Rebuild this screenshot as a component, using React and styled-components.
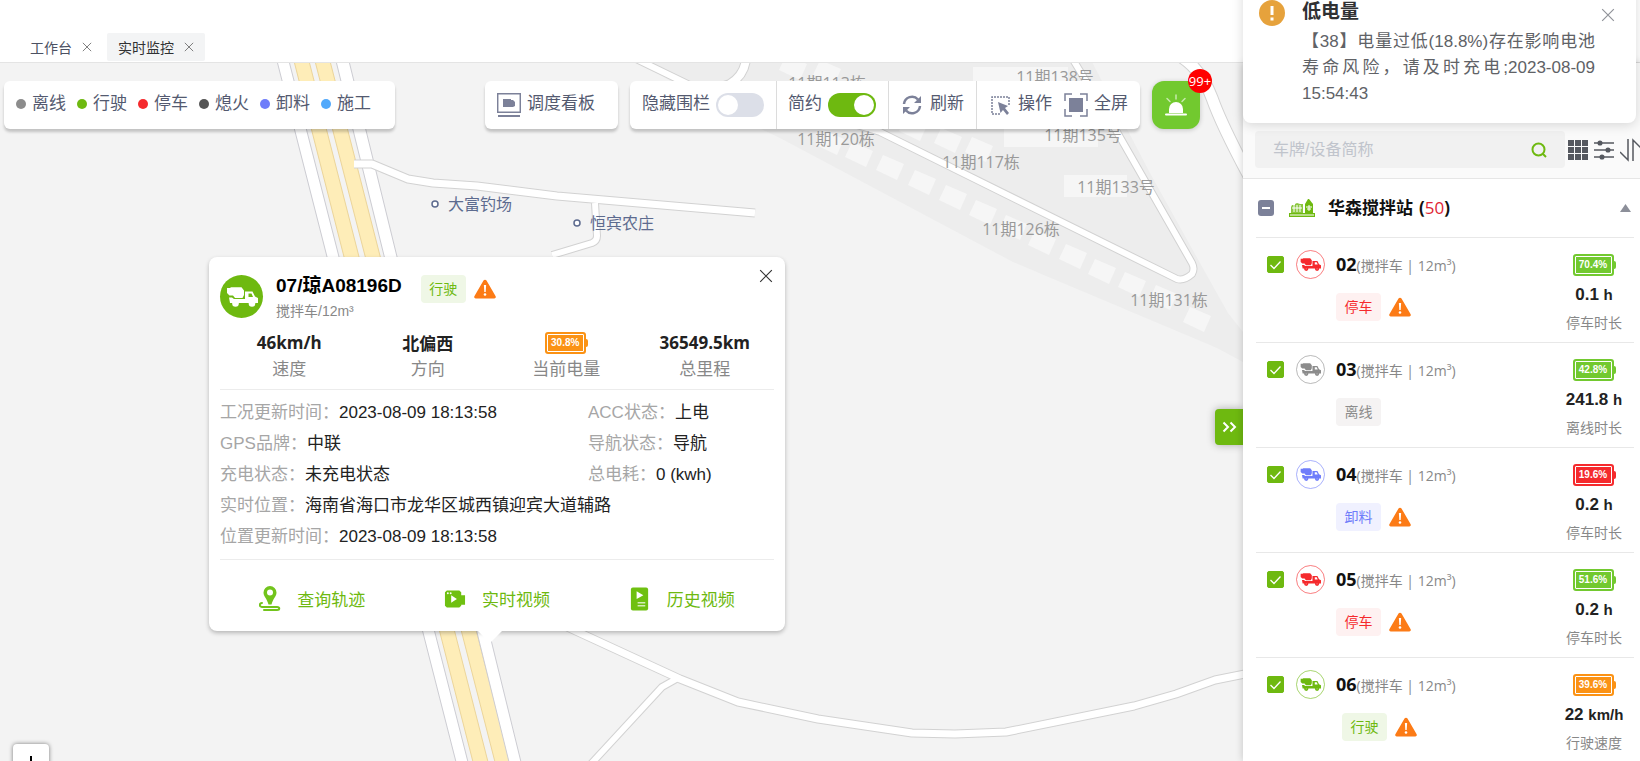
import { useState } from "react";
import styled, { createGlobalStyle } from "styled-components";

const GlobalStyle = createGlobalStyle`
  *, *::before, *::after {
    box-sizing: border-box;
  }
  body {
    margin: 0;
    overflow: hidden;
    background: #fff;
    font-family: "Liberation Sans", "Noto Sans CJK SC", sans-serif;
    font-size: 17px;
    color: #222;
  }
  button, input {
    font: inherit;
    color: inherit;
  }
  button {
    background: none;
    border: none;
    padding: 0;
    cursor: pointer;
  }
  svg {
    display: block;
    flex-shrink: 0;
  }
`;

const UI_FONT = `"Open Sans", "Noto Sans CJK SC", sans-serif`;

const STATUS = {
  offline: { name: "离线", color: "#8c8c8c", tint: "#f5f3f3" },
  driving: { name: "行驶", color: "#6eb910", tint: "#eff7e6" },
  parked: { name: "停车", color: "#f52a2d", tint: "#fef1f1" },
  stalled: { name: "熄火", color: "#555555", tint: "#f2f2f2" },
  unloading: { name: "卸料", color: "#6f7dfa", tint: "#f0f1ff" },
  working: { name: "施工", color: "#52a9fb", tint: "#eef6ff" },
};

const Page = styled.div`
  position: relative;
  display: flex;
  flex-direction: column;
  height: 100vh;
  overflow: hidden;
`;
const TabBar = styled.nav`
  display: flex;
  align-items: flex-end;
  gap: 4px;
  height: 63px;
  padding: 0 19px 1px;
  border-bottom: 1px solid #e4e4e4;
  flex-shrink: 0;
`;
const Tab = styled.div`
  display: flex;
  align-items: center;
  gap: 10px;
  height: 28px;
  padding: 0 11px;
  border-radius: 2px;
  font-size: 14px;
  color: ${(props) => (props.$active ? "#303133" : "#4c5162")};
  background: ${(props) => (props.$active ? "#f3f4f5" : "transparent")};
`;
const Body = styled.div`
  display: flex;
  flex: 1;
  min-height: 0;
`;
const MapArea = styled.main`
  position: relative;
  flex: 1;
  min-width: 0;
  overflow: hidden;
  background: #f3f3f3;
`;
const MapDrawing = styled.svg`
  position: absolute;
  top: 0;
  left: 0;
  width: 1243px;
  height: 698px;
  font-family: ${UI_FONT};
  font-size: 16px;
`;

const Overlay = styled.div`
  position: relative;
  display: flex;
  gap: 12px;
  padding: 18px 43px 0 4px;
  color: #545a70;
`;
const Bar = styled.div`
  display: flex;
  align-items: center;
  height: 48px;
  background: #fff;
  border-radius: 6px;
  box-shadow: 0 3px 3px rgba(0, 0, 0, 0.2);
  line-height: 24px;
  white-space: nowrap;
`;
const Legend = styled(Bar)`
  gap: 11px;
  padding: 0 24px 2px 12px;
  margin-right: auto;
`;
const LegendItem = styled.span`
  display: flex;
  align-items: center;
  gap: 6px;
`;
const Dot = styled.i`
  width: 10px;
  height: 10px;
  border-radius: 50%;
  background: ${(props) => props.$color};
`;
const BoardButton = styled(Bar).attrs({ as: "button" })`
  gap: 6px;
  padding: 0 23px 0 12px;
`;
const BarText = styled.span`
  padding-bottom: 2px;
`;
const ToolGroup = styled.div`
  display: flex;
  align-items: center;
  gap: 12px;
  height: 100%;
  padding: 0 12px;
  & + & {
    padding-left: 11px;
    border-left: 1px solid #dcdcdc;
  }
`;
const ToolButton = styled.button`
  display: flex;
  align-items: center;
  gap: 6px;
`;
const SwitchLabel = styled.label`
  display: flex;
  align-items: center;
  gap: 6px;
`;
const Switch = styled.input.attrs({ type: "checkbox", role: "switch" })`
  appearance: none;
  display: flex;
  width: 48px;
  height: 24px;
  margin: 0;
  padding: 2px;
  border-radius: 12px;
  background: #dcdfe8;
  cursor: pointer;
  &::before {
    content: "";
    width: 20px;
    height: 20px;
    border-radius: 50%;
    background: #fff;
  }
  &:checked {
    justify-content: flex-end;
    background: #6eb910;
  }
`;
const AlarmButton = styled.button`
  position: relative;
  display: grid;
  place-items: center;
  width: 48px;
  height: 48px;
  border-radius: 12px;
  background: #72c92f;
  box-shadow: 0 1px 5px rgba(0, 0, 0, 0.2);
`;
const AlarmBadge = styled.span`
  position: absolute;
  top: -12px;
  right: -12px;
  width: 24px;
  height: 24px;
  border-radius: 50%;
  background: #ff0000;
  color: #fff;
  font: 13px/24px ${UI_FONT};
  text-align: center;
`;

const Popup = styled.section`
  position: absolute;
  top: 194px;
  left: 209px;
  width: 576px;
  padding: 18px 11px 0;
  background: #fff;
  border-radius: 8px;
  box-shadow: 0 2px 4px rgba(0, 0, 0, 0.25);
  &::after {
    content: "";
    position: absolute;
    top: 100%;
    left: 269px;
    border: 12px solid transparent;
    border-top-color: #fff;
    border-bottom: none;
  }
`;
const PopupHead = styled.header`
  display: flex;
  align-items: flex-start;
  height: 52px;
`;
const TruckBadge = styled.span`
  display: grid;
  place-items: center;
  width: 43px;
  height: 43px;
  margin-right: 13px;
  border-radius: 50%;
  background: #6eb910;
  color: #fff;
`;
const PopupTitle = styled.h2`
  margin: 0;
  font-size: 19px;
  line-height: 22px;
  color: #000;
`;
const PopupSub = styled.p`
  margin: 2px 0 0;
  font-size: 14px;
  line-height: 24px;
  color: #888;
`;
const PopupTags = styled.div`
  display: flex;
  align-items: center;
  gap: 8px;
  margin-left: 19px;
`;
const Tag = styled.span`
  width: 45px;
  border-radius: 4px;
  font-size: 14px;
  line-height: 28px;
  text-align: center;
  color: ${(props) => STATUS[props.$status].color};
  background: ${(props) => STATUS[props.$status].tint};
`;
const PopupClose = styled.button`
  margin: -6px 1px 0 auto;
`;
const Stats = styled.dl`
  display: grid;
  grid-template-columns: repeat(4, 1fr);
  margin: 0;
  padding: 2px 0 5px;
  border-bottom: 1px solid #ececec;
  text-align: center;
`;
const Stat = styled.div`
  display: flex;
  flex-direction: column-reverse;
`;
const StatName = styled.dt`
  line-height: 28px;
  color: #888;
`;
const StatValue = styled.dd`
  display: flex;
  justify-content: center;
  align-items: center;
  height: 27px;
  margin: 0;
  font-family: ${UI_FONT};
  font-weight: 700;
`;
const Info = styled.dl`
  display: grid;
  grid-template-columns: 368px 1fr;
  margin: 0;
  padding: 7px 0;
  border-bottom: 1px solid #ececec;
`;
const InfoItem = styled.div`
  display: flex;
  grid-column: ${(props) => (props.$wide ? "1 / -1" : "auto")};
  line-height: 31px;
  white-space: nowrap;
`;
const InfoName = styled.dt`
  color: #a6a6a6;
`;
const InfoValue = styled.dd`
  margin: 0;
`;
const Actions = styled.div`
  display: grid;
  grid-template-columns: repeat(3, 1fr);
  height: 71px;
  padding-top: 6px;
`;
const Action = styled.button`
  display: flex;
  align-items: center;
  justify-content: center;
  gap: 16px;
  color: #6eb910;
`;

const Expander = styled.button`
  position: absolute;
  top: 346px;
  right: 0;
  display: grid;
  place-items: center;
  width: 28px;
  height: 36px;
  border-radius: 4px 0 0 4px;
  background: #6eb910;
  box-shadow: 0 0 8px rgba(0, 0, 0, 0.3);
`;
const ZoomIn = styled.button`
  position: absolute;
  top: 681px;
  left: 13px;
  width: 36px;
  height: 36px;
  border-radius: 4px;
  background: #fff;
  box-shadow: 0 0 4px rgba(0, 0, 0, 0.5);
`;

const Side = styled.aside`
  position: relative;
  display: flex;
  flex-direction: column;
  width: 397px;
  overflow: hidden;
  background: #fff;
  box-shadow: 0 0 8px rgba(0, 0, 0, 0.2);
`;
const SideHead = styled.div`
  display: flex;
  align-items: center;
  gap: 6px;
  padding: 68px 0 10px 12px;
  border-bottom: 1px solid #e6e6e6;
  background: #fafafa;
  color: #55585f;
  flex-shrink: 0;
`;
const SearchBox = styled.label`
  display: flex;
  align-items: center;
  width: 310px;
  height: 37px;
  margin-right: -3px;
  padding: 0 18px;
  border-radius: 4px;
  background: #f1f1f1;
  flex-shrink: 0;
`;
const SearchInput = styled.input`
  flex: 1;
  min-width: 0;
  border: none;
  outline: none;
  background: none;
  padding: 0;
  font-size: 16px;
  &::placeholder {
    color: #c0c4cc;
  }
`;
const IconButton = styled.button`
  flex-shrink: 0;
`;
const Group = styled.div`
  display: flex;
  align-items: center;
  height: 59px;
  margin: 0 6px 0 13px;
  padding: 0 3px 0 2px;
  border-bottom: 1px solid #e8e8e8;
  flex-shrink: 0;
`;
const GroupName = styled.h3`
  display: flex;
  gap: 6px;
  margin: 0 auto 0 13px;
  font: 700 17px/24px ${UI_FONT};
  color: #111;
`;
const GroupCount = styled.span`
  em {
    font-style: normal;
    font-weight: 400;
    color: #e02433;
  }
`;
const CollapseBox = styled.button`
  display: grid;
  place-items: center;
  width: 16px;
  height: 16px;
  margin-right: 15px;
  border-radius: 3px;
  background: #7c8199;
`;
const VehicleList = styled.ul`
  margin: 0 6px 0 13px;
  padding: 0;
  list-style: none;
`;
const Vehicle = styled.li`
  display: flex;
  align-items: flex-start;
  height: 105px;
  padding: 12px 0 0 11px;
  border-bottom: 1px solid #e8e8e8;
`;
const Check = styled.span`
  display: grid;
  margin: 6px 12px 0 0;
  > * {
    grid-area: 1 / 1;
  }
  svg {
    pointer-events: none;
  }
`;
const CheckInput = styled.input.attrs({ type: "checkbox" })`
  appearance: none;
  width: 17px;
  height: 17px;
  margin: 0;
  border: 1px solid #6eb910;
  border-radius: 2px;
  &:checked {
    background: #6eb910;
  }
`;
const Avatar = styled.span`
  display: grid;
  place-items: center;
  width: 29px;
  height: 29px;
  border: 1px solid ${(props) => props.$color}99;
  border-radius: 50%;
  color: ${(props) => props.$color};
`;
const VehicleMain = styled.div`
  flex: 1;
  margin-left: 11px;
`;
const VehicleName = styled.label`
  display: block;
  font: 14px/28px ${UI_FONT};
  color: #888;
  white-space: nowrap;
  b {
    font-size: 18px;
    color: #111;
  }
`;
const VehicleTags = styled.div`
  display: flex;
  align-items: center;
  gap: 8px;
  padding: ${(props) => (props.$moving ? "13px 0 0 6px" : "13px 0 0")};
`;
const VehicleData = styled.div`
  display: flex;
  flex-direction: column;
  align-items: center;
  width: 80px;
  padding-top: 4px;
`;
const VehicleValue = styled.strong`
  margin-top: 7px;
  line-height: 24px;
  small {
    font-size: 15px;
  }
`;
const VehicleCaption = styled.span`
  margin-top: 4px;
  font-size: 14px;
  line-height: 24px;
  color: #888;
`;
const BatteryCase = styled.span`
  display: flex;
  align-items: center;
  color: ${(props) => props.$color};
  &::after {
    content: "";
    width: 2px;
    height: 8px;
    border-radius: 0 2px 2px 0;
    background: currentColor;
  }
`;
const BatteryCell = styled.span`
  width: 41px;
  height: 22px;
  padding: 2px;
  border-radius: 3px;
  background: currentColor;
`;
const BatteryText = styled.span`
  display: block;
  border: 1px solid #fff;
  border-radius: 1px;
  color: #fff;
  font: 700 10px/16px "Liberation Sans", sans-serif;
  text-align: center;
`;

const Notice = styled.div`
  position: absolute;
  top: -17px;
  right: 4px;
  display: flex;
  align-items: flex-start;
  width: 393px;
  padding: 17px 13px 16px 16px;
  border-radius: 8px;
  background: #fff;
  box-shadow: 0 2px 12px rgba(0, 0, 0, 0.15);
`;
const NoticeText = styled.div`
  width: 293px;
  margin-left: 17px;
`;
const NoticeTitle = styled.h2`
  margin: 0;
  font-size: 19px;
  line-height: 23px;
  color: #303133;
`;
const NoticeBody = styled.p`
  margin: 6px 0 0;
  line-height: 26px;
  color: #606266;
  text-align: justify;
`;
const NoticeClose = styled.button`
  margin: 8px 8px 0 auto;
`;

const CloseIcon = ({ size = 12, color = "#666" }) => (
  <svg width={size} height={size} viewBox="0 0 12 12" stroke={color} fill="none">
    <path d="M1 1l10 10M11 1L1 11" />
  </svg>
);

const Truck = ({ width }) => (
  <svg width={width} viewBox="0 0 32 20" fill="currentColor">
    <path d="M1 1h3l1-.8h10.500L18 3.500V8l-1.500 3H9L7 8.500H3.500L1 6z" />
    <path
      fillRule="evenodd"
      d="M3 10.500h3l2 1.500h11V4.500h7.500L29 9.500l3 1.500v5H4zM22.500 6.500v3.500h4.500l-1.500-3.500z"
    />
    <circle cx="9.500" cy="16.500" r="3.300" />
    <circle cx="26" cy="16.500" r="3.300" />
    <circle cx="9.500" cy="16.500" r="1" fill="#fff" fillOpacity=".4" />
    <circle cx="26" cy="16.500" r="1" fill="#fff" fillOpacity=".4" />
  </svg>
);

const Warning = () => (
  <svg width="22" height="20" viewBox="0 0 22 20">
    <path
      d="M9.500 1.500a1.800 1.800 0 0 1 3 0l9 15.500a1.600 1.600 0 0 1-1.500 2.500H2A1.600 1.600 0 0 1 .5 17z"
      fill="#fc7b16"
    />
    <path d="M9.900 6h2.200l-.4 7h-1.400z" fill="#fff" />
    <circle cx="11" cy="15.500" r="1.300" fill="#fff" />
  </svg>
);

const Battery = ({ level, color }) => (
  <BatteryCase $color={color}>
    <BatteryCell>
      <BatteryText>{level}</BatteryText>
    </BatteryCell>
  </BatteryCase>
);

const BoardIcon = () => (
  <svg width="24" height="24" viewBox="0 0 24 24" fill="none" stroke="#7c8199">
    <path d="M.7 .7h22.600v18.600H.7z" strokeWidth="1.500" />
    <path d="M1 23h22" strokeWidth="2" />
    <path d="M6 6h8v1h2l2 2v4l-2 1H6z" fill="#7c8199" stroke="none" />
  </svg>
);

const RefreshIcon = () => (
  <svg width="24" height="24" viewBox="0 0 24 24" fill="none" stroke="#7c8199" strokeWidth="2.500">
    <path d="M4 11a8 8 0 0 1 14-4.500M20 13a8 8 0 0 1-14 4.500" />
    <path d="M21 3v7h-7zM3 21v-7h7z" fill="#7c8199" stroke="none" />
  </svg>
);

const SelectIcon = () => (
  <svg width="24" height="24" viewBox="0 0 24 24" fill="none" stroke="#7c8199" strokeWidth="1.500">
    <path d="M12 21H4V4h17v9" strokeDasharray="2 1" />
    <path d="M10 9l10 4-3 2 4 5-2 2-4-5-2.500 3z" fill="#7c8199" stroke="none" />
  </svg>
);

const FullIcon = () => (
  <svg width="24" height="24" viewBox="0 0 24 24" fill="none" stroke="#7c8199" strokeWidth="1.500">
    <path d="M1 8V1h7M16 1h7v7M23 16v7h-7M8 23H1v-7" />
    <path d="M5 5h14v14H5z" fill="#7c8199" stroke="none" />
  </svg>
);

const SirenIcon = () => (
  <svg width="24" height="24" viewBox="0 0 24 24" fill="#fff" stroke="#fff" strokeLinecap="round">
    <path d="M5 20v-4a7 7 0 0 1 14 0v4z" stroke="none" />
    <path d="M2 21.500h20" strokeWidth="2" />
    <path d="M12 6V2M6 8.500L3 5.500M18 8.500L21 5.500" strokeWidth="1.500" opacity=".6" />
  </svg>
);

const TrackIcon = () => (
  <svg width="22" height="25" viewBox="0 0 22 25" fill="none" stroke="#72c41c">
    <path
      d="M11 0a6.500 6.500 0 0 1 6.500 6.500c0 4-3.500 6-5 12h-3c-1.500-6-5-8-5-12A6.500 6.500 0 0 1 11 0zm0 3.500a3 3 0 1 0 0 6 3 3 0 0 0 0-6z"
      fill="#72c41c"
      fillRule="evenodd"
      stroke="none"
    />
    <path d="M3 17c-3 .5-3 3.500 0 4h15c3 0 3 3 0 3H5" strokeWidth="2" strokeLinecap="round" />
  </svg>
);

const LiveIcon = () => (
  <svg width="22" height="20" viewBox="0 0 23 20" fill="#6fc011">
    <path d="M3 1h13l2 2v3h4v10h-4v1l-2 2H3l-2-2V3z" />
    <path d="M7.500 6l6 4-6 4z" fill="#fff" />
    <circle cx="4" cy="4" r="1" fill="#fff" />
    <circle cx="7" cy="4" r="1" fill="#fff" />
  </svg>
);

const HistoryIcon = () => (
  <svg width="22" height="24" viewBox="0 0 23 24" fill="#6fc011">
    <rect x="2" y="0" width="18" height="24" rx="2" />
    <path d="M8 4l7 4-7 4z" fill="#fff" />
    <path d="M9 16h8M9 19h8" stroke="#fff" strokeWidth="1.500" opacity=".7" />
  </svg>
);

const StationIcon = () => (
  <svg width="26" height="18" viewBox="0 0 26 18" fill="#6eb910">
    <path d="M0 14h26v4H0z" />
    <path d="M3 6h3V5l2-1 3 1h3v10H2V8z" opacity=".8" />
    <path d="M16 5l3-5h1l4 5v9h-8z" />
    <path
      d="M1 16h24M3 9h10M5 6v7M8 6v7M11 6v7M17 8h6M18 10h4M20 6v6"
      stroke="#fff"
      strokeWidth="1"
      fill="none"
    />
  </svg>
);

const HIGHWAY = [
  { from: [277, 289], to: [456, 468], fill: "#fff", edge: "#ccccd2" },
  { from: [294, 309], to: [473, 488], fill: "#feedb8", edge: "#ecd59a" },
  { from: [315, 330], to: [495, 510], fill: "#feedb8", edge: "#ecd59a" },
  { from: [336, 349], to: [509, 521], fill: "#fff", edge: "#ccccd2" },
];

const ROADS = [
  { d: "M354 164h18L408 179L433 183L477 186L557 196L755 213", width: 7 },
  { d: "M595 203L597 236Q597 241 592 243L552 255", width: 6 },
  { d: "M565 626L680 679L738 702L818 719L912 733L955 734L1006 732L1134 706L1176 694L1215 680L1245 674", width: 7 },
  { d: "M678 678L662 687L590 765", width: 6 },
  { d: "M630 56L700 90L800 108L880 132L1177 279Q1184 281 1192 274Q1195 269 1192 263L1117 132L1072 58", width: 6 },
  { d: "M746 56Q746 74 730 84L700 94", width: 8 },
  { d: "M1176 54Q1200 66 1212 98Q1222 126 1250 178", width: 11 },
];

const HOUSES = [
  [793, 67], [827, 72], [830, 142], [859, 154], [890, 167], [922, 182],
  [953, 197], [983, 212], [1013, 227], [1042, 242], [1073, 256],
  [1102, 271], [1132, 284], [1163, 297], [1197, 319], [948, 140],
  [979, 149], [913, 128],
];

const BUILDING_LABELS = [
  ["11期113栋", 827, 89],
  ["11期138号", 1055, 83],
  ["11期135号", 1083, 141],
  ["11期120栋", 836, 145],
  ["11期117栋", 981, 168],
  ["11期133号", 1116, 193],
  ["11期126栋", 1021, 235],
  ["11期131栋", 1169, 306],
];

const PLACES = [
  ["大富钓场", 435, 204],
  ["恒宾农庄", 577, 223],
];

const BaseMap = () => (
  <MapDrawing viewBox="0 63 1243 698">
    <path d="M640 62H1092L1150 173L1200 263L1228 313L1243 332V362L1217 348L1013 262L780 138L700 100z" fill="#ededed" />
    {HOUSES.map(([x, y]) => (
      <path
        key={`${x}-${y}`}
        transform={`translate(${x} ${y})`}
        d="M-7 -12L14 -3L7 13L-14 3z"
        fill="#f6f6f6"
      />
    ))}
    <path d="M973 67h95v22h-95zM1004 126h94v21h-94zM1064 175h63v22h-63z" fill="#f6f6f6" />
    {HIGHWAY.map(({ from, to, fill, edge }) => (
      <path
        key={from[0]}
        d={`M${from[0]} 61L${from[1]} 61L${to[1]} 762L${to[0]} 762z`}
        fill={fill}
        stroke={edge}
      />
    ))}
    <g fill="none" strokeLinejoin="round">
      {ROADS.map(({ d, width }) => (
        <path key={d} d={d} stroke="#d2d2d2" strokeWidth={width + 2} />
      ))}
      {ROADS.map(({ d, width }) => (
        <path key={d} d={d} stroke="#fff" strokeWidth={width} />
      ))}
    </g>
    {BUILDING_LABELS.map(([name, x, y]) => (
      <text key={name} x={x} y={y} fill="#999" textAnchor="middle">
        {name}
      </text>
    ))}
    {PLACES.map(([name, x, y]) => (
      <g key={name} fill="#5d6b8f">
        <circle cx={x} cy={y} r="3" fill="#fff" stroke="#5d6b8f" strokeWidth="1.500" />
        <text x={x + 13} y={y + 6}>
          {name}
        </text>
      </g>
    ))}
  </MapDrawing>
);

const MapToolbar = () => {
  const [hideFence, setHideFence] = useState(false);
  const [simple, setSimple] = useState(true);
  return (
    <Overlay>
      <Legend>
        {Object.values(STATUS).map(({ name, color }) => (
          <LegendItem key={name}>
            <Dot $color={color} />
            {name}
          </LegendItem>
        ))}
      </Legend>
      <BoardButton>
        <BoardIcon />
        <BarText>调度看板</BarText>
      </BoardButton>
      <Bar>
        <ToolGroup>
          <SwitchLabel>
            <BarText>隐藏围栏</BarText>
            <Switch checked={hideFence} onChange={(e) => setHideFence(e.target.checked)} />
          </SwitchLabel>
        </ToolGroup>
        <ToolGroup>
          <SwitchLabel>
            <BarText>简约</BarText>
            <Switch checked={simple} onChange={(e) => setSimple(e.target.checked)} />
          </SwitchLabel>
        </ToolGroup>
        <ToolGroup>
          <ToolButton>
            <RefreshIcon />
            <BarText>刷新</BarText>
          </ToolButton>
        </ToolGroup>
        <ToolGroup>
          <ToolButton>
            <SelectIcon />
            <BarText>操作</BarText>
          </ToolButton>
          <ToolButton>
            <FullIcon />
            <BarText>全屏</BarText>
          </ToolButton>
        </ToolGroup>
      </Bar>
      <AlarmButton aria-label="报警">
        <SirenIcon />
        <AlarmBadge>99+</AlarmBadge>
      </AlarmButton>
    </Overlay>
  );
};

const STATS = [
  ["速度", "46km/h"],
  ["方向", "北偏西"],
  ["当前电量", <Battery key="battery" level="30.8%" color="#fb9214" />],
  ["总里程", "36549.5km"],
];

const INFO = [
  { name: "工况更新时间：", value: "2023-08-09 18:13:58" },
  { name: "ACC状态：", value: "上电" },
  { name: "GPS品牌：", value: "中联" },
  { name: "导航状态：", value: "导航" },
  { name: "充电状态：", value: "未充电状态" },
  { name: "总电耗：", value: "0 (kwh)" },
  { name: "实时位置：", value: "海南省海口市龙华区城西镇迎宾大道辅路", wide: true },
  { name: "位置更新时间：", value: "2023-08-09 18:13:58", wide: true },
];

const VehiclePopup = ({ onClose }) => (
  <Popup>
    <PopupHead>
      <TruckBadge>
        <Truck width={32} />
      </TruckBadge>
      <div>
        <PopupTitle>07/琼A08196D</PopupTitle>
        <PopupSub>搅拌车/12m³</PopupSub>
      </div>
      <PopupTags>
        <Tag $status="driving">行驶</Tag>
        <Warning />
      </PopupTags>
      <PopupClose aria-label="关闭" onClick={onClose}>
        <CloseIcon size={14} color="#333" />
      </PopupClose>
    </PopupHead>
    <Stats>
      {STATS.map(([name, value]) => (
        <Stat key={name}>
          <StatName>{name}</StatName>
          <StatValue>{value}</StatValue>
        </Stat>
      ))}
    </Stats>
    <Info>
      {INFO.map(({ name, value, wide }) => (
        <InfoItem key={name} $wide={wide}>
          <InfoName>{name}</InfoName>
          <InfoValue>{value}</InfoValue>
        </InfoItem>
      ))}
    </Info>
    <Actions>
      <Action>
        <TrackIcon />
        查询轨迹
      </Action>
      <Action>
        <LiveIcon />
        实时视频
      </Action>
      <Action>
        <HistoryIcon />
        历史视频
      </Action>
    </Actions>
  </Popup>
);

const VEHICLES = [
  { id: "02", status: "parked", alarm: true, level: "70.4%", battery: "#72c92f", value: "0.1", unit: "h", caption: "停车时长" },
  { id: "03", status: "offline", alarm: false, level: "42.8%", battery: "#72c92f", value: "241.8", unit: "h", caption: "离线时长" },
  { id: "04", status: "unloading", alarm: true, level: "19.6%", battery: "#f52a2d", value: "0.2", unit: "h", caption: "停车时长" },
  { id: "05", status: "parked", alarm: true, level: "51.6%", battery: "#72c92f", value: "0.2", unit: "h", caption: "停车时长" },
  { id: "06", status: "driving", alarm: true, level: "39.6%", battery: "#fb9214", value: "22", unit: "km/h", caption: "行驶速度" },
];

const VehicleRow = ({ vehicle }) => {
  const { id, status, alarm, level, battery, value, unit, caption } = vehicle;
  return (
    <Vehicle>
      <Check>
        <CheckInput id={`vehicle-${id}`} defaultChecked />
        <svg width="17" height="17" viewBox="0 0 17 17" fill="none" stroke="#fff" strokeWidth="1.300">
          <path d="M3.500 9l3.500 3.500 6.500-7" />
        </svg>
      </Check>
      <Avatar $color={STATUS[status].color}>
        <Truck width={21} />
      </Avatar>
      <VehicleMain>
        <VehicleName htmlFor={`vehicle-${id}`}>
          <b>{id}</b>(搅拌车 | 12m³)
        </VehicleName>
        <VehicleTags $moving={status === "driving"}>
          <Tag $status={status}>{STATUS[status].name}</Tag>
          {alarm && <Warning />}
        </VehicleTags>
      </VehicleMain>
      <VehicleData>
        <Battery level={level} color={battery} />
        <VehicleValue>
          {value} <small>{unit}</small>
        </VehicleValue>
        <VehicleCaption>{caption}</VehicleCaption>
      </VehicleData>
    </Vehicle>
  );
};

const SidePanel = () => (
  <Side>
    <SideHead>
      <SearchBox>
        <SearchInput placeholder="车牌/设备简称" aria-label="车牌/设备简称" />
        <svg width="16" height="16" viewBox="0 0 16 16" fill="none" stroke="#6eb910" strokeWidth="2">
          <circle cx="7.500" cy="7.500" r="6" />
          <path d="M12 12l3 3" />
        </svg>
      </SearchBox>
      <IconButton aria-label="网格">
        <svg width="20" height="20" viewBox="0 0 20 20" fill="#55585f">
          <path d="M0 0h6v6H0zM7 0h6v6H7zM14 0h6v6h-6zM0 7h6v6H0zM7 7h6v6H7zM14 7h6v6h-6zM0 14h6v6H0zM7 14h6v6H7zM14 14h6v6h-6z" />
        </svg>
      </IconButton>
      <IconButton aria-label="筛选">
        <svg width="20" height="20" viewBox="0 0 20 20" fill="#55585f" stroke="#55585f" strokeWidth="1.500">
          <path d="M0 3h20M0 10h20M0 17h20" />
          <circle cx="6" cy="3" r="1.800" />
          <circle cx="14" cy="10" r="1.800" />
          <circle cx="8" cy="17" r="1.800" />
        </svg>
      </IconButton>
      <IconButton aria-label="排序">
        <svg width="26" height="24" viewBox="0 0 26 24" fill="none" stroke="#55585f" strokeWidth="1.500">
          <path d="M0 14l8 8V1M13 23V2l10 10" />
        </svg>
      </IconButton>
    </SideHead>
    <Group>
      <CollapseBox aria-label="全选">
        <svg width="8" height="2" viewBox="0 0 8 2">
          <path d="M0 1h8" stroke="#fff" strokeWidth="2" />
        </svg>
      </CollapseBox>
      <StationIcon />
      <GroupName>
        华森搅拌站
        <GroupCount>
          (<em>50</em>)
        </GroupCount>
      </GroupName>
      <IconButton aria-label="收起">
        <svg width="11" height="8" viewBox="0 0 11 8">
          <path d="M5.500 0L11 8H0z" fill="#8c8f99" />
        </svg>
      </IconButton>
    </Group>
    <VehicleList>
      {VEHICLES.map((vehicle) => (
        <VehicleRow key={vehicle.id} vehicle={vehicle} />
      ))}
    </VehicleList>
  </Side>
);

const LowBatteryNotice = ({ onClose }) => (
  <Notice role="alert">
    <svg width="26" height="26" viewBox="0 0 26 26">
      <circle cx="13" cy="13" r="13" fill="#e6a23c" />
      <path d="M13 6v9M13 17.500v3" stroke="#fff" strokeWidth="3" />
    </svg>
    <NoticeText>
      <NoticeTitle>低电量</NoticeTitle>
      <NoticeBody>【38】电量过低(18.8%)存在影响电池寿命风险，请及时充电;2023-08-09 15:54:43</NoticeBody>
    </NoticeText>
    <NoticeClose aria-label="关闭" onClick={onClose}>
      <CloseIcon size={14} color="#909399" />
    </NoticeClose>
  </Notice>
);

const App = () => {
  const [popupOpen, setPopupOpen] = useState(true);
  const [noticeOpen, setNoticeOpen] = useState(true);
  return (
    <>
      <GlobalStyle />
      <Page>
        <TabBar>
          <Tab>
            工作台
            <button aria-label="关闭工作台">
              <CloseIcon size={10} />
            </button>
          </Tab>
          <Tab $active>
            实时监控
            <button aria-label="关闭实时监控">
              <CloseIcon size={10} />
            </button>
          </Tab>
        </TabBar>
        <Body>
          <MapArea>
            <BaseMap />
            <MapToolbar />
            {popupOpen && <VehiclePopup onClose={() => setPopupOpen(false)} />}
            <Expander aria-label="展开">
              <svg width="15" height="12" viewBox="0 0 15 12" fill="none" stroke="#fff" strokeWidth="2">
                <path d="M1.500 1.500L6 6l-4.500 4.500M8.500 1.500L13 6l-4.500 4.500" />
              </svg>
            </Expander>
            <ZoomIn aria-label="放大">
              <svg width="36" height="36" viewBox="0 0 36 36" stroke="#000" strokeWidth="2">
                <path d="M18 12v12M12 18h12" />
              </svg>
            </ZoomIn>
          </MapArea>
          <SidePanel />
        </Body>
        {noticeOpen && <LowBatteryNotice onClose={() => setNoticeOpen(false)} />}
      </Page>
    </>
  );
};

export default App;
